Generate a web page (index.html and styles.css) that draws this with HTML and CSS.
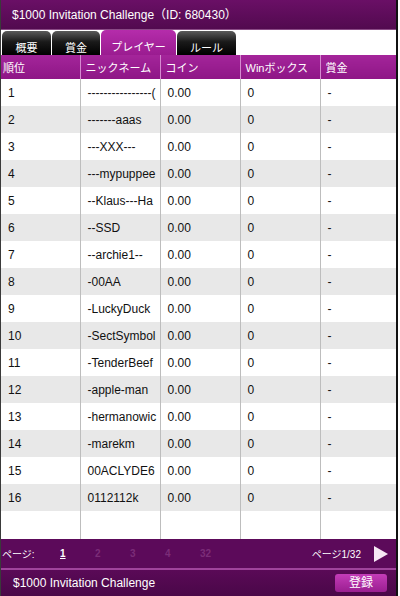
FILE: index.html
```html
<!DOCTYPE html>
<html lang="ja">
<head>
  <meta charset="UTF-8">
  <title>$1000 Invitation Challenge</title>
  <link rel="stylesheet" href="styles.css">
</head>
<body>
  <div class="frame">
    <div class="title-bar">$1000 Invitation Challenge（ID: 680430）</div>

    <div class="tabs">
      <div class="tab">概要</div>
      <div class="tab">賞金</div>
      <div class="tab active">プレイヤー</div>
      <div class="tab">ルール</div>
    </div>

    <div class="board">
      <table class="players">
        <colgroup>
          <col class="c-rank">
          <col class="c-mid">
          <col class="c-mid">
          <col class="c-mid">
          <col>
        </colgroup>
        <thead>
          <tr>
            <th>順位</th>
            <th>ニックネーム</th>
            <th>コイン</th>
            <th>Winボックス</th>
            <th>賞金</th>
          </tr>
        </thead>
        <tbody>
          <tr><td>1</td><td>----------------(</td><td>0.00</td><td>0</td><td>-</td></tr>
          <tr><td>2</td><td>-------aaas</td><td>0.00</td><td>0</td><td>-</td></tr>
          <tr><td>3</td><td>---XXX---</td><td>0.00</td><td>0</td><td>-</td></tr>
          <tr><td>4</td><td>---mypuppee</td><td>0.00</td><td>0</td><td>-</td></tr>
          <tr><td>5</td><td>--Klaus---Ha</td><td>0.00</td><td>0</td><td>-</td></tr>
          <tr><td>6</td><td>--SSD</td><td>0.00</td><td>0</td><td>-</td></tr>
          <tr><td>7</td><td>--archie1--</td><td>0.00</td><td>0</td><td>-</td></tr>
          <tr><td>8</td><td>-00AA</td><td>0.00</td><td>0</td><td>-</td></tr>
          <tr><td>9</td><td>-LuckyDuck</td><td>0.00</td><td>0</td><td>-</td></tr>
          <tr><td>10</td><td>-SectSymbol</td><td>0.00</td><td>0</td><td>-</td></tr>
          <tr><td>11</td><td>-TenderBeef</td><td>0.00</td><td>0</td><td>-</td></tr>
          <tr><td>12</td><td>-apple-man</td><td>0.00</td><td>0</td><td>-</td></tr>
          <tr><td>13</td><td>-hermanowic</td><td>0.00</td><td>0</td><td>-</td></tr>
          <tr><td>14</td><td>-marekm</td><td>0.00</td><td>0</td><td>-</td></tr>
          <tr><td>15</td><td>00ACLYDE6</td><td>0.00</td><td>0</td><td>-</td></tr>
          <tr><td>16</td><td>0112112k</td><td>0.00</td><td>0</td><td>-</td></tr>
          <tr class="filler"><td></td><td></td><td></td><td></td><td></td></tr>
        </tbody>
      </table>
    </div>

    <div class="pager">
      <span class="pager-label">ページ:</span>
      <span class="page current">1</span>
      <span class="page">2</span>
      <span class="page">3</span>
      <span class="page">4</span>
      <span class="page">32</span>
      <span class="page-count">ページ1/32</span>
      <svg class="next" width="14" height="16" viewBox="0 0 14 16">
        <polygon points="0,0 14,8 0,16" fill="#f6e8f4"/>
      </svg>
    </div>

    <div class="footer">
      <span class="footer-title">$1000 Invitation Challenge</span>
      <span class="register">登録</span>
    </div>
  </div>
</body>
</html>
```

FILE: styles.css
```css
body {
  margin: 0;
  font-family: 'Liberation Sans', Arial, 'Noto Sans CJK JP', sans-serif;
  background: #fff;
}
.frame {
  width: 398px;
  height: 596px;
  box-sizing: border-box;
  border-left: 1px solid #3a3a3a;
  border-right: 2px solid #111;
  display: flex;
  flex-direction: column;
  overflow: hidden;
}
.title-bar {
  height: 30px;
  flex-shrink: 0;
  box-sizing: border-box;
  padding: 5px 0 0 11px;
  background: linear-gradient(#6a0f66, #520a4f);
  border-bottom: 1px solid #8a4a86;
  color: #fff;
  font-size: 12px;
}
.tabs {
  height: 25px;
  flex-shrink: 0;
  display: flex;
  align-items: flex-end;
  padding-left: 1px;
  gap: 1px;
  background: #fff;
}
.tab {
  height: 24px;
  box-sizing: border-box;
  padding: 8px 0 0;
  width: 49px;
  text-align: center;
  color: #fff;
  font-size: 11px;
  background: linear-gradient(#5a5a5a, #1a1a1a 45%, #000);
  border-radius: 5px 5px 0 0;
}
.tab:nth-child(2) {
  width: 48px;
}
.tab.active {
  width: 75px;
  height: 25px;
  padding-top: 8px;
  background: linear-gradient(#b52cab, #9a1c90);
}
.tab:last-child {
  width: 59px;
}
.board {
  height: 484px;
  flex-shrink: 0;
  background: #fff;
}
.players {
  width: 100%;
  border-collapse: collapse;
  table-layout: fixed;
  font-size: 12px;
}
.c-rank {
  width: 79px;
}
.c-mid {
  width: 80px;
}
.players th {
  height: 24px;
  padding: 0 0 0 5px;
  text-align: left;
  font-weight: normal;
  font-size: 11px;
  color: #fff;
  background: linear-gradient(#a4259a, #8e1686);
  border-left: 1px solid #d58ad0;
  white-space: nowrap;
  overflow: hidden;
}
.players th:first-child {
  padding-left: 2px;
}
.players th:first-child,
.players td:first-child {
  border-left: none;
}
.players td {
  height: 27px;
  padding: 0 0 0 7px;
  color: #111;
  border-left: 1px solid #bdbdbd;
  white-space: nowrap;
  overflow: hidden;
  text-overflow: clip;
}
.players tbody tr:nth-child(even) td {
  background: #e8e8e8;
}
.players tbody tr.filler td {
  height: 28px;
  background: #fff;
}
.pager {
  height: 29px;
  flex-shrink: 0;
  display: flex;
  align-items: center;
  background: #5c0a5a;
  color: #fff;
  font-size: 10px;
  border-bottom: 2px solid #a0449c;
}
.pager-label {
  width: 58px;
  padding-left: 1px;
}
.page {
  width: 35px;
  color: #7b2d78;
  font-weight: bold;
  font-size: 10px;
}
.page.current {
  color: #fff;
  text-decoration: underline;
}
.page-count {
  margin-left: auto;
  margin-right: 13px;
}
.next {
  margin-right: 8px;
}
.footer {
  flex: 1;
  display: flex;
  align-items: center;
  justify-content: space-between;
  padding: 0 9px 0 12px;
  background: linear-gradient(#5a0a57, #4a0748);
  color: #fff;
  font-size: 12px;
}
.register {
  width: 52px;
  height: 18px;
  line-height: 18px;
  text-align: center;
  border-radius: 3px;
  background: linear-gradient(#c43cb8, #9a1e90);
  font-size: 12px;
}
```
